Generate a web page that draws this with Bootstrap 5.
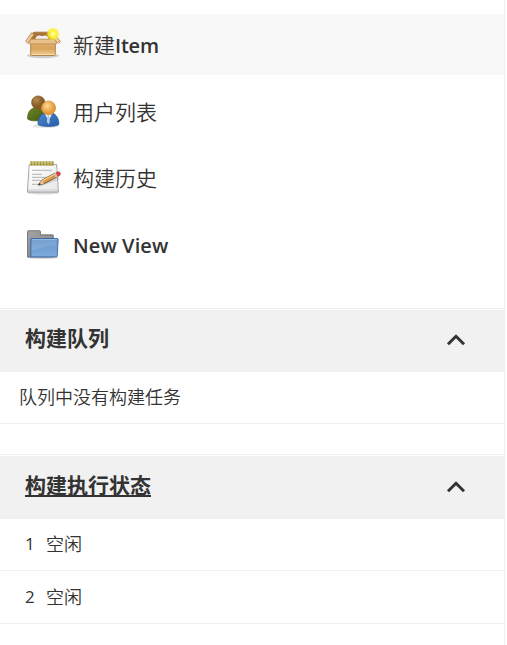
<!DOCTYPE html>
<html lang="zh-CN">
<head>
<meta charset="utf-8">
<meta name="viewport" content="width=device-width, initial-scale=1">
<title>Jenkins</title>
<link href="https://cdn.jsdelivr.net/npm/bootstrap@5.3.0/dist/css/bootstrap.min.css" rel="stylesheet">
<style>
  body { font-family: "Open Sans", "Noto Sans CJK SC", sans-serif; color: #333; background: #fff; overflow: hidden; }
  .side-panel { width: 505px; height: 645px; border-right: 1px solid #f0f0f0; padding-top: 14px; }
  .tasks { gap: 5.6px; height: 294px; }
  .task-link { height: 61px; padding: 1px 25px 0; gap: 12px; color: #333; font-size: 21px; line-height: 30px; font-weight: 350; white-space: nowrap; }
  .task-link.hovered > span { padding-top: 1px; }
  .task-link.hovered { background: #f8f8f8; }
  .task-link svg { width: 36px; height: 36px; flex: none; }
  .latin { font-size: 20px; font-weight: 560; }
  .task-link > .latin { padding-top: 2px; letter-spacing: .1px; }
  .task-link span .latin { letter-spacing: -.2px; }
  .pane-block { border-top: 1px solid #f0f0f0; padding-top: 1px; }
  .pane-head { height: 62px; padding: 0 38px 6px 25px; background: #f1f1f1; font-size: 21px; line-height: 30px; font-weight: 700; }
  .pane-head svg { margin-top: 2px; }
  .pane-head a { color: #333; text-decoration-thickness: 2px; text-underline-offset: 2px; }
  .pane-row { height: 52px; padding-bottom: 1px; border-bottom: 1px solid #f0f0f0; font-size: 18px; line-height: 26px; font-weight: 350; }
  .queue { margin-bottom: 30px; }
  .queue .pane-row { padding-left: 19px; }
  .executors .pane-head { height: 63px; }
  .executors .pane-row { padding-left: 25px; }
  .executors .pane-row + .pane-row { height: 53px; }
  .slot { width: 21px; font-size: 17px; font-weight: 400; }
</style>
</head>
<body>
<div class="side-panel">
  <nav class="tasks d-flex flex-column">
    <a href="#" class="task-link hovered d-flex align-items-center text-decoration-none">
      <svg viewBox="0 0 36 36">
        <defs>
          <linearGradient id="box" x1="0" y1="0" x2="0" y2="1"><stop offset="0" stop-color="#dfb073"/><stop offset=".5" stop-color="#d9a45c"/><stop offset="1" stop-color="#f0cc96"/></linearGradient>
          <radialGradient id="glow"><stop offset="0" stop-color="#fffef0"/><stop offset=".28" stop-color="#fff95e"/><stop offset=".65" stop-color="#fcee26" stop-opacity=".9"/><stop offset="1" stop-color="#fff130" stop-opacity="0"/></radialGradient>
        </defs>
        <ellipse cx="18" cy="28.6" rx="16" ry="2.6" fill="#999" opacity=".45"/>
        <path d="M6 7.5 9 5.2h18l3.5 5-1 3h-24z" fill="#a87436" stroke="#a6763a" stroke-width=".9"/>
        <path d="M11 10.5c0-2 4-2.8 6-1.2 2-1.6 6-.8 6 1.2l1 2H10z" fill="#eee"/>
        <path d="M6.5 5.8.6 14.3l2.2 1.8L9 7.6zM30 8l5.4 6.5-1.8 1.8L28 12z" fill="#eecb98" stroke="#b28449" stroke-width=".8"/>
        <path d="M5.7 14.5h24.6v13q0 1-1 1H6.7q-1 0-1-1z" fill="url(#box)" stroke="#b07c3c" stroke-width=".9"/>
        <path d="M6.7 27.5h22.6" stroke="#f7dcae"/>
        <path d="M6 12.2h24l1.8 4.6H3.8z" fill="#e8c08a" stroke="#c2925a" stroke-width=".8"/>
        <circle cx="28" cy="7" r="7" fill="url(#glow)"/>
      </svg>
      <span>新建<span class="latin">Item</span></span>
    </a>
    <a href="#" class="task-link d-flex align-items-center text-decoration-none">
      <svg viewBox="0 0 36 36">
        <defs>
          <radialGradient id="brownHead" cx=".35" cy=".3"><stop offset="0" stop-color="#b98a50"/><stop offset="1" stop-color="#875b25"/></radialGradient>
          <radialGradient id="lightHead" cx=".4" cy=".35"><stop offset="0" stop-color="#ffd795"/><stop offset="1" stop-color="#e49a38"/></radialGradient>
          <linearGradient id="green" x1="0" y1="0" x2="1" y2="1"><stop offset="0" stop-color="#6c8628"/><stop offset="1" stop-color="#445b10"/></linearGradient>
          <linearGradient id="blue" x1="0" y1="0" x2="1" y2="1"><stop offset="0" stop-color="#4f84c8"/><stop offset="1" stop-color="#2561ac"/></linearGradient>
        </defs>
        <ellipse cx="21" cy="31.8" rx="13" ry="2" fill="#999" opacity=".3"/>
        <path d="M2.6 25c-.3-7 3-11.3 8.8-11.3s8.3 4 8.3 11.5c-3 2-14.1 2.5-17.1-.2z" fill="url(#green)" stroke="#46600f" stroke-width=".7"/>
        <circle cx="13.2" cy="8.5" r="6.6" fill="url(#brownHead)" stroke="#80551f" stroke-width=".7"/>
        <path d="M13 30.5c-.2-7.5 3.6-12 10.3-12s10.7 4.5 10.5 12c-3.7 2.6-17.1 2.6-20.8 0z" fill="url(#blue)" stroke="#2458a1" stroke-width=".8"/>
        <path d="m20 20 3.5 7 3.5-7z" fill="#f4f6f8"/>
        <path d="m22.6 21.5-.8 6 1.7 3 1.4-3-.9-6z" fill="#b4c7de"/>
        <circle cx="23.6" cy="13.9" r="7" fill="url(#lightHead)" stroke="#d18d35" stroke-width=".7"/>
      </svg>
      <span>用户列表</span>
    </a>
    <a href="#" class="task-link d-flex align-items-center text-decoration-none">
      <svg viewBox="0 0 36 36">
        <defs><linearGradient id="sheet" x1="0" y1="0" x2="1" y2="1"><stop offset="0" stop-color="#fff"/><stop offset="1" stop-color="#e9e9e9"/></linearGradient></defs>
        <g transform="translate(0 .9)">
        <ellipse cx="18" cy="31.8" rx="16" ry="1.8" fill="#999" opacity=".35"/>
        <path d="M4.2 3.5h27.4l1.7 25.7v2H2.5v-2z" fill="#ddd" stroke="#929292" stroke-width=".8"/>
        <path d="M4.8 4.2h26.2l1.5 24H3.3z" fill="url(#sheet)"/>
        <path d="M7 9.5h20M7 13.5h10M7 16.5h18M7 19.5h9M7 23.5h7" stroke="#bfc2c5" stroke-width="1.1"/>
        <path d="M6.5 .3v4.5m3-4.5v4.5m3-4.5v4.5m3-4.5v4.5m3-4.5v4.5m3-4.5v4.5m3-4.5v4.5m3-4.5v4.5" stroke="#a0922c" stroke-width="2.2"/>
        <path d="M5.9 .5v3.5m3-3.5v3.5m3-3.5v3.5m3-3.5v3.5m3-3.5v3.5m3-3.5v3.5m3-3.5v3.5m3-3.5v3.5" stroke="#dacb67" stroke-width=".5"/>
        <path d="m14 25.2 20-7.5" stroke="#777" stroke-width="2" opacity=".25"/>
        <path d="m13.2 24 3.9-5L30 12.2l2 4L19 22.8z" fill="#d6994a" stroke="#6b4118" stroke-width=".8"/>
        <path d="m17.6 19.7 12.2-6.4" stroke="#f7ca80" stroke-width="1.3"/>
        <path d="m17.1 19-3.9 5 5.8-1.2z" fill="#e8c39a"/>
        <path d="m14.7 22-1.8 2.4 3.1-.7z" fill="#222"/>
        <path d="m28.8 12.8 2.2-1.1 2 4-2.2 1.1z" fill="#bfc3c4"/>
        <path d="m31 11.7 2-.8q1.9-.2 2.3 1.4t-.9 2.5l-1.4.9z" fill="#e43f3e" stroke="#ae2929" stroke-width=".5"/>
        </g>
      </svg>
      <span>构建历史</span>
    </a>
    <a href="#" class="task-link d-flex align-items-center text-decoration-none">
      <svg viewBox="0 0 36 36">
        <defs>
          <linearGradient id="folderBack" x1="0" y1="0" x2="1" y2="1"><stop offset="0" stop-color="#a4a4a4"/><stop offset="1" stop-color="#777"/></linearGradient>
          <linearGradient id="folderFront" x1="0" y1="0" x2="0" y2="1"><stop offset="0" stop-color="#6392c8"/><stop offset=".5" stop-color="#6f9fd3"/><stop offset="1" stop-color="#82abdc"/></linearGradient>
        </defs>
        <g transform="translate(0 .5)">
        <ellipse cx="18" cy="30" rx="16" ry="1.5" fill="#888" opacity=".35"/>
        <path d="M2.5 29.5V4q0-.8.8-.8h11.4q.8 0 .8.8v3.3h12q.8 0 .8.8v21.4z" fill="url(#folderBack)" stroke="#737373" stroke-width=".9"/>
        <path d="M4 6.5h10m-10 3h23" stroke="#aaa" stroke-width=".5"/>
        <path d="M6.6 11h25.6q1 0 .9 1l-.8 16.2q-.1 1.2-1.3 1.2H5.2q.7-.3.7-1.5L5.8 12q0-1 .8-1z" fill="url(#folderFront)" stroke="#3568a8" stroke-width=".9"/>
        <path d="M6.8 12h25l-.5 6C20 18.5 14 21 6.4 23z" fill="#fff" opacity=".12"/>
        <path d="M7 12h25" stroke="#a6c5e9" stroke-width=".7"/>
        </g>
      </svg>
      <span class="latin">New View</span>
    </a>
  </nav>

  <section class="pane-block queue">
    <div class="pane-head d-flex align-items-center justify-content-between">
      <span>构建队列</span>
      <svg width="20" height="20" viewBox="0 0 20 20" fill="none" stroke="#333" stroke-width="3"><path d="m2 15.3 8-8 8 8"/></svg>
    </div>
    <div class="pane-row d-flex align-items-center">队列中没有构建任务</div>
  </section>

  <section class="pane-block executors">
    <div class="pane-head d-flex align-items-center justify-content-between">
      <a href="#" class="text-decoration-underline">构建执行状态</a>
      <svg width="20" height="20" viewBox="0 0 20 20" fill="none" stroke="#333" stroke-width="3"><path d="m2 15.3 8-8 8 8"/></svg>
    </div>
    <div class="pane-row d-flex align-items-center"><span class="slot">1</span><span>空闲</span></div>
    <div class="pane-row d-flex align-items-center"><span class="slot">2</span><span>空闲</span></div>
  </section>
</div>
</body>
</html>
